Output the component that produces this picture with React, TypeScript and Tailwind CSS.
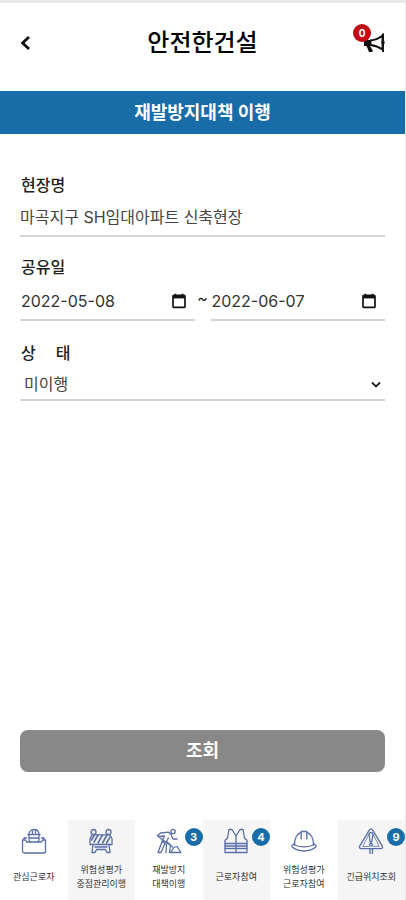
import { useState } from "react"
import type { ReactNode } from "react"

function BackIcon() {
  return (
    <svg width="10" height="14" viewBox="0 0 10 14" fill="none" stroke="#111" strokeWidth="2.8" aria-hidden="true">
      <path d="M9 1 2.6 7 9 13" />
    </svg>
  )
}

function MegaphoneIcon() {
  return (
    <svg width="24" height="22" viewBox="0 0 24 22" fill="none" aria-hidden="true">
      <path d="M3 8h6v6l2.8 4.500-.6 1.500H8L5.500 14H3z" fill="#111" />
      <path d="M9.500 8.500C14 8 18 6.500 21.500 3.500v14C18 15 14 13.500 9.500 13z" fill="#fff" stroke="#111" strokeWidth="1.900" />
      <path d="M22 1.500v18.500" stroke="#111" strokeWidth="2" />
      <path d="M20.500 10.500h3" stroke="#111" strokeWidth="3" />
    </svg>
  )
}

function CalendarIcon() {
  return (
    <svg width="16" height="16" viewBox="0 0 16 16" fill="none" aria-hidden="true">
      <rect x="2" y="2.4" width="12" height="12" rx="1" stroke="#111" strokeWidth="1.7" />
      <path d="M2 2h12v3.4H2z" fill="#111" />
      <path d="M4.4.8v2M11.6.8v2" stroke="#111" strokeWidth="1.6" />
    </svg>
  )
}

function NavIcon({ children }: { children: ReactNode }) {
  return (
    <svg
      width="26"
      height="26"
      viewBox="0 0 26 26"
      fill="none"
      stroke="#5a6fa8"
      strokeWidth="1.3"
      strokeLinejoin="round"
      strokeLinecap="round"
      aria-hidden="true"
    >
      {children}
    </svg>
  )
}

const workerIcon = (
  <NavIcon>
    <path d="M1.5 12h3l1 2h15l1-2h3v11a2 2 0 0 1-2 2h-19a2 2 0 0 1-2-2z" />
    <path d="M3 11.5V10h2.5M23 11.5V10h-2.500" />
    <path d="M8 6.500C8 3.500 10 1.500 13 1.500s5 2 5 5M7 6.500h12M8 6.500v5c0 1 .5 2 1.500 2.500M18 6.500v5c0 1-.5 2-1.500 2.500M8 10h10M11.500 2v3M14.500 2v3" />
  </NavIcon>
)

const barrierIcon = (
  <NavIcon>
    <circle cx="5.5" cy="4" r="2.5" />
    <circle cx="20.5" cy="4" r="2.5" />
    <path d="M4 6.8h18l2 4v5.700H2v-5.700z" />
    <path d="m6 14 4-7M10 15l4.500-8M14.500 15 19 7M18.500 15l3.500-6M3.500 12 6 7.500" strokeWidth="1.6" />
    <path d="M5 16.500 4 24.500h3l1.500-3h9l1.500 3h3l-1-8M7 19h12" />
  </NavIcon>
)

const diggingIcon = (
  <NavIcon>
    <circle cx="17" cy="3.5" r="2.2" />
    <path d="m1.500 7.500 3-2.500 8-.8 2.500 2.300 2 4.500h4M2 8.500l6-.5M8.500 8 6 13l4.500 3.500-.5 8M12.500 10l-2 3.500 4 3.500-1 7.500M6 13.500l-4 11h3l3.500-8M3.500 9.500l13 9.500" />
    <path d="m14.500 24.500 3.500-5 3-1 4 6z" />
  </NavIcon>
)

const vestIcon = (
  <NavIcon>
    <path d="M6 1.500h3l4 6.500 4-6.500h3l1.500 8.500 2.500 2.500v12H2v-12L4.500 10z" />
    <path d="M13 8v16.500M2 15.500h22M2 18h22M2 20.500h22" />
  </NavIcon>
)

const helmetIcon = (
  <NavIcon>
    <path d="M3.500 17C3 10 6.500 5.500 10.200 4.500V3.500h5.600v1C19.500 5.500 23 10 22.500 17" />
    <path d="M3.500 15.500 1 17.300v1.500C4 21.500 8 23 13 23s9-1.500 12-4.200v-1.500l-2.500-1.800" />
    <path d="M3.500 17c6 2.400 13 2.400 19 0M10.200 4.500v6.500M15.800 4.500v6.500" />
  </NavIcon>
)

const warningIcon = (
  <NavIcon>
    <path d="M13 1.200c.8 0 1.300.4 1.700 1l9.600 16c.7 1.300-.1 2.400-1.500 2.400H3.200c-1.400 0-2.200-1.100-1.500-2.400l9.600-16c.4-.6.9-1 1.700-1z" />
    <path d="M11 6 4.800 18.400h6M15 6l6.200 12.400h-6" strokeWidth=".8" />
    <path d="M13 4.500c-2 0-2.200 2-1.600 4.500l.8 5h1.600l.8-5c.6-2.500.4-4.500-1.600-4.500z" />
    <circle cx="13" cy="16.800" r="1.400" />
    <path d="M12 20.600V25.500M14.500 20.600V25.500" />
  </NavIcon>
)

const navItems = [
  { lines: ["관심근로자"], icon: workerIcon },
  { lines: ["위험성평가", "중점관리이행"], icon: barrierIcon },
  { lines: ["재발방지", "대책이행"], icon: diggingIcon, badge: 3 },
  { lines: ["근로자참여"], icon: vestIcon, badge: 4 },
  { lines: ["위험성평가", "근로자참여"], icon: helmetIcon },
  { lines: ["긴급위치조회"], icon: warningIcon, badge: 9 },
]

function DateField({ label, initial }: { label: string; initial: string }) {
  const [value, setValue] = useState(initial)
  return (
    <div className="flex min-w-0 flex-1 items-center border-b-2 border-[#d4d4d4] pr-2">
      <input
        type="text"
        inputMode="numeric"
        aria-label={label}
        value={value}
        onChange={(e) => setValue(e.target.value)}
        className="h-10 w-full min-w-0 bg-transparent pt-1 pl-px text-base text-[#333] outline-none"
      />
      <button type="button" aria-label={`${label} 선택`} className="shrink-0 pt-1">
        <CalendarIcon />
      </button>
    </div>
  )
}

export default function App() {
  const [site, setSite] = useState("마곡지구 SH임대아파트 신축현장")

  return (
    <div className="flex min-h-screen flex-col border-t-3 border-r border-[#e8e8e8] bg-white font-['Inter','Noto_Sans_CJK_KR',sans-serif] text-[#222]">
      {/* Header */}
      <header className="grid h-22 grid-cols-[1fr_auto_1fr] items-center px-5 pb-2">
        <button type="button" aria-label="뒤로" className="flex w-6 items-center">
          <BackIcon />
        </button>
        <h1 className="text-2xl font-medium text-black">안전한건설</h1>
        <button type="button" aria-label="알림" className="relative justify-self-end">
          <MegaphoneIcon />
          <span className="absolute -top-2 -left-2 flex size-[18px] items-center justify-center rounded-full bg-[#c40a14] text-[10px] font-bold text-white">
            0
          </span>
        </button>
      </header>

      <h2 className="bg-[#186ca8] py-2 text-center text-lg font-bold leading-[27px] text-white">재발방지대책 이행</h2>

      <main className="flex flex-1 flex-col px-5 pt-[39px]">
        {/* Site */}
        <label htmlFor="site" className="pl-px text-base font-medium leading-6">
          현장명
        </label>
        <input
          id="site"
          type="text"
          value={site}
          onChange={(e) => setSite(e.target.value)}
          className="h-10 w-full border-b-2 border-[#d4d4d4] bg-transparent text-base text-[#444] outline-none"
        />

        {/* Period */}
        <fieldset className="mt-[18px]">
          <legend className="pl-px text-base font-medium leading-6">공유일</legend>
          <div className="flex items-center">
            <DateField label="시작일" initial="2022-05-08" />
            <span className="w-4 pb-1 text-center text-base leading-6">~</span>
            <DateField label="종료일" initial="2022-06-07" />
          </div>
        </fieldset>

        {/* Status */}
        <label htmlFor="status" className="mt-5 flex gap-5 pl-px text-base font-medium leading-6">
          <span>상</span>
          <span>태</span>
        </label>
        <div className="relative">
          <select
            id="status"
            defaultValue="미이행"
            className="h-9 w-full appearance-none border-b-2 border-[#d4d4d4] bg-transparent pt-1 pl-1 text-base text-[#444] outline-none"
          >
            <option>미이행</option>
            <option>이행</option>
          </select>
          <svg
            className="pointer-events-none absolute top-4 right-1"
            width="10"
            height="8"
            viewBox="0 0 10 8"
            fill="none"
            stroke="#222"
            strokeWidth="1.8"
            aria-hidden="true"
          >
            <path d="m1 1.5 4 4 4-4" />
          </svg>
        </div>

        <button type="button" className="mt-auto mb-12 h-[42px] rounded-lg bg-[#888] text-lg font-bold text-white">
          조회
        </button>
      </main>

      {/* Bottom menu */}
      <nav className="grid grid-cols-6">
        {navItems.map((item) => (
          <a
            key={item.lines.join("")}
            href="#"
            className="relative flex h-20 flex-col items-center pt-2 text-center text-[9px] leading-[14px] text-[#333] even:bg-[#f5f5f5]"
          >
            {item.icon}
            <span className="flex flex-1 flex-col justify-center">
              {item.lines.map((line) => (
                <span key={line}>{line}</span>
              ))}
            </span>
            {item.badge && (
              <span className="absolute top-2 right-0 flex size-[18px] items-center justify-center rounded-full bg-[#186ca8] text-[11px] font-bold text-white">
                {item.badge}
              </span>
            )}
          </a>
        ))}
      </nav>
    </div>
  )
}
